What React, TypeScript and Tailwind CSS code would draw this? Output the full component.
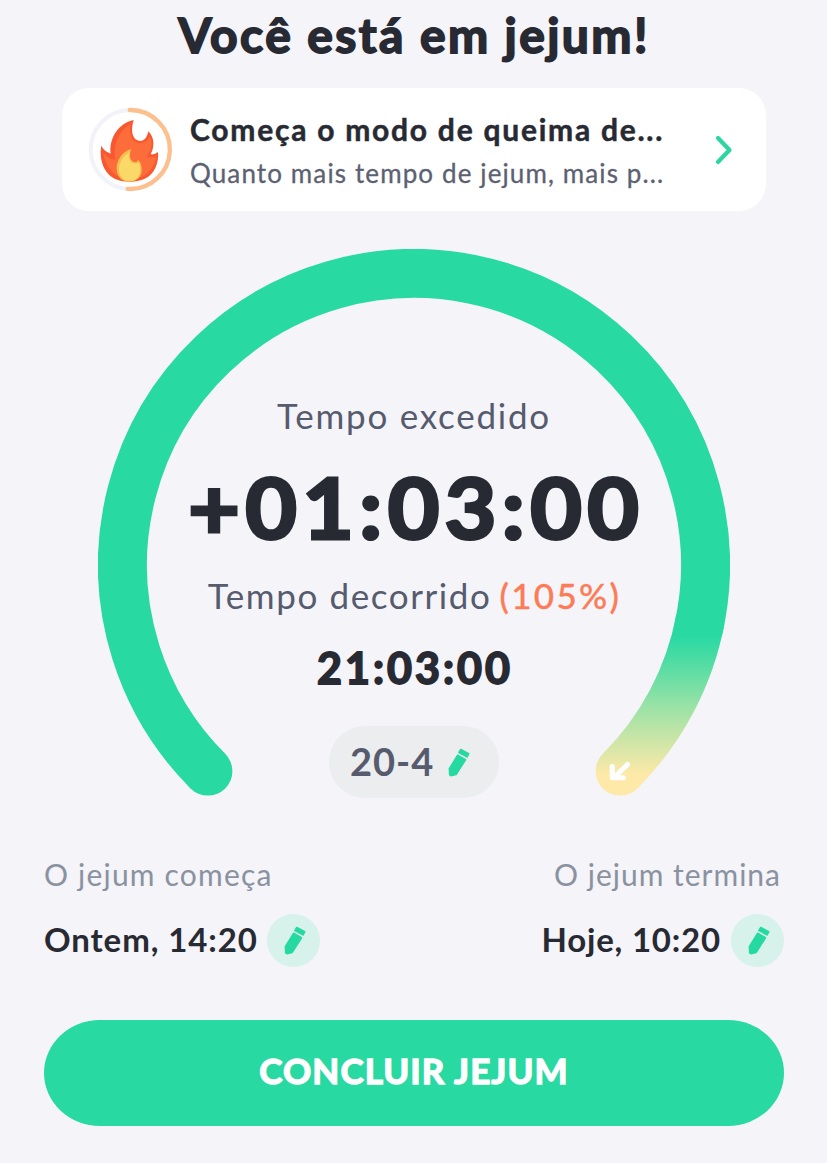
function Pencil() {
  return (
    <svg viewBox="0 0 22 29" className="h-[29px] w-[22px] shrink-0" fill="#26d9a1" stroke="#26d9a1" strokeWidth="1.8" strokeLinejoin="round">
      <path d="M12.7 1.6 L20.6 5.8 L19 8.7 L11 4.4 Z" />
      <path d="M9.6 7.4 L17.4 11.7 L8 26.4 L3 27.6 L1.8 26.8 L1.5 20.8 Z" />
    </svg>
  );
}

function FlameBadge() {
  return (
    <svg viewBox="88 84 252 252" className="h-[84px] w-[84px] shrink-0 overflow-visible" fill="none">
      <circle cx="211.5" cy="208.5" r="118.5" stroke="#f2f3f8" strokeWidth="12" />
      <path d="M210 90 A118.5 118.5 0 1 1 204 326.7" stroke="#fcc08f" strokeWidth="13" strokeLinecap="round" />
      <path
        d="M222 120 C180 128 147 172 153 221 C140 216 131 209 125 197 C120 225 125 254 141 276 C156 297 182 305 210 305 C248 305 275 293 288 262 C294 247 297 232 295 216 C288 222 281 224 273 223 C284 202 286 174 266 154 C262 171 256 183 241 183 C217 181 212 152 222 120 Z"
        fill="#f9572f"
      />
      <path
        d="M213 132 C186 146 158 186 167 239 C152 238 139 229 131 216 C132 240 146 270 172 288 C190 297 230 299 252 288 C274 275 286 252 290 228 C281 234 270 233 261 231 C277 208 281 188 270 170 C262 184 252 189 240 189 C214 187 207 163 213 132 Z"
        fill="#fd6c3b"
      />
      <path
        d="M215 207 C190 213 169 240 171 269 C173 292 189 305 209 305 C232 305 247 290 246 268 C246 255 242 246 236 239 C234 246 227 247 221 245 C210 240 208 224 215 207 Z"
        fill="#f2bf4e"
      />
      <path
        d="M209 217 C192 227 177 248 178 271 C180 291 192 303 209 303 C229 303 242 289 242 269 C242 260 240 253 237 248 C232 252 225 252 219 250 C209 245 205 233 209 217 Z"
        fill="#fbd968"
      />
    </svg>
  );
}

function ProgressRing() {
  return (
    <svg viewBox="0 0 632 549" className="h-[549px] w-[632px] [grid-area:1/1]" fill="none">
      <defs>
        <linearGradient id="ring" gradientUnits="userSpaceOnUse" x1="0" y1="386" x2="0" y2="526">
          <stop offset="0" stopColor="#28d9a2" />
          <stop offset="0.12" stopColor="#3fdba3" />
          <stop offset="0.55" stopColor="#a2e3a6" />
          <stop offset="1" stopColor="#fee9a8" />
        </linearGradient>
      </defs>
      <path d="M522.1 522.1 A291.5 291.5 0 0 0 602.45 370" stroke="url(#ring)" strokeWidth="49" />
      <circle cx="522.1" cy="522.1" r="24.5" fill="url(#ring)" />
      <path d="M109.9 522.1 A291.5 291.5 0 1 1 600.4 380" stroke="#28d9a2" strokeWidth="49" />
      <circle cx="109.9" cy="522.1" r="24.5" fill="#28d9a2" />
      <path
        d="M529.5 515.5 L516 528.5 M514.2 517.5 V528.8 H525.5"
        stroke="#fff"
        strokeWidth="5"
        strokeLinecap="round"
        strokeLinejoin="round"
      />
    </svg>
  );
}

function EditButton() {
  return (
    <button className="flex h-[53px] w-[53px] items-center justify-center rounded-full bg-[#d7f1eb] pl-[3px]">
      <Pencil />
    </button>
  );
}

export default function App() {
  return (
    <main className="flex h-[1163px] w-[827px] flex-col overflow-hidden bg-[#f4f4f9] pr-[43px] pl-[44px] font-['Lato','Liberation_Sans',sans-serif] text-[#282a33]">
      <h1 className="h-[66px] pt-[2px] text-center text-[48px] leading-[66px] font-bold tracking-[2.4px] [-webkit-text-stroke:1.8px_#282a33]">
        Você está em jejum!
      </h1>

      <section className="mx-[18px] mt-[22px] flex h-[123px] items-center rounded-[27px] bg-white pl-[27px]">
        <FlameBadge />
        <div className="ml-[17px] flex w-[490px] flex-col pt-[2px] whitespace-nowrap">
          <p className="text-[30px] leading-[44px] font-bold tracking-[1.75px] [-webkit-text-stroke:0.5px_#282a33]">
            Começa o modo de queima de...
          </p>
          <p className="text-[26px] leading-[44px] tracking-[1.12px] text-[#5c6072] [-webkit-text-stroke:0.3px_#5c6072]">
            Quanto mais tempo de jejum, mais p...
          </p>
        </div>
        <svg viewBox="0 0 20 32" className="ml-[34px] h-[32px] w-[20px] shrink-0" fill="none">
          <path d="M4 4 L15.5 16 L4 28" stroke="#2dd6a1" strokeWidth="4.2" strokeLinecap="round" strokeLinejoin="round" />
        </svg>
      </section>

      <section className="mt-[38px] grid justify-center">
        <ProgressRing />
        <div className="flex flex-col items-center pt-[144px] [grid-area:1/1]">
          <p className="text-[35px] leading-[44px] tracking-[1.75px] text-[#565b6d]">Tempo excedido</p>
          <p className="mt-[20px] pl-[4px] text-[84px] leading-[100px] font-bold tracking-[5.1px] [scale:1.06_1] [-webkit-text-stroke:3.2px_#282a33]">
            +01:03:00
          </p>
          <p className="mt-[16px] flex gap-[8px] pl-[1px] text-[35px] leading-[44px] tracking-[1.6px] text-[#565b6d]">
            <span>Tempo decorrido</span>
            <span className="font-medium tracking-[2.3px] text-[#fc7c57] [-webkit-text-stroke:0.3px_#fc7c57]">(105%)</span>
          </p>
          <p className="mt-[25px] pl-[2px] text-[43px] leading-[52px] font-bold tracking-[3px] [-webkit-text-stroke:1.8px_#282a33]">
            21:03:00
          </p>
          <button className="mt-[32px] flex h-[72px] w-[170px] items-center rounded-full bg-[#ecedee] pl-[21px]">
            <span className="w-[98px] pb-[3px] text-left text-[38px] leading-[48px] font-bold tracking-[1px] text-[#565b6d]">
              20-4
            </span>
            <Pencil />
          </button>
        </div>
      </section>

      <section className="mt-[56px] flex justify-between">
        <div>
          <p className="text-[30px] leading-[40px] tracking-[1.2px] text-[#8a92a0]">O jejum começa</p>
          <div className="mt-[20px] flex h-[53px] items-center gap-[9px]">
            <span className="pb-[4px] text-[33px] leading-[40px] font-bold tracking-[0.9px]">Ontem, 14:20</span>
            <EditButton />
          </div>
        </div>
        <div className="flex flex-col items-end">
          <p className="pr-[3px] text-[30px] leading-[40px] tracking-[1px] text-[#8a92a0]">O jejum termina</p>
          <div className="mt-[20px] flex h-[53px] items-center gap-[10px]">
            <span className="pb-[4px] text-[33px] leading-[40px] font-bold tracking-[0.8px]">Hoje, 10:20</span>
            <EditButton />
          </div>
        </div>
      </section>

      <button className="mt-[53px] flex h-[106px] items-center justify-center rounded-[56px/53px] bg-[#28d9a2] pb-[5px] text-[35px] font-bold tracking-[1.1px] text-white [-webkit-text-stroke:1.4px_#fff]">
        CONCLUIR JEJUM
      </button>
    </main>
  );
}
